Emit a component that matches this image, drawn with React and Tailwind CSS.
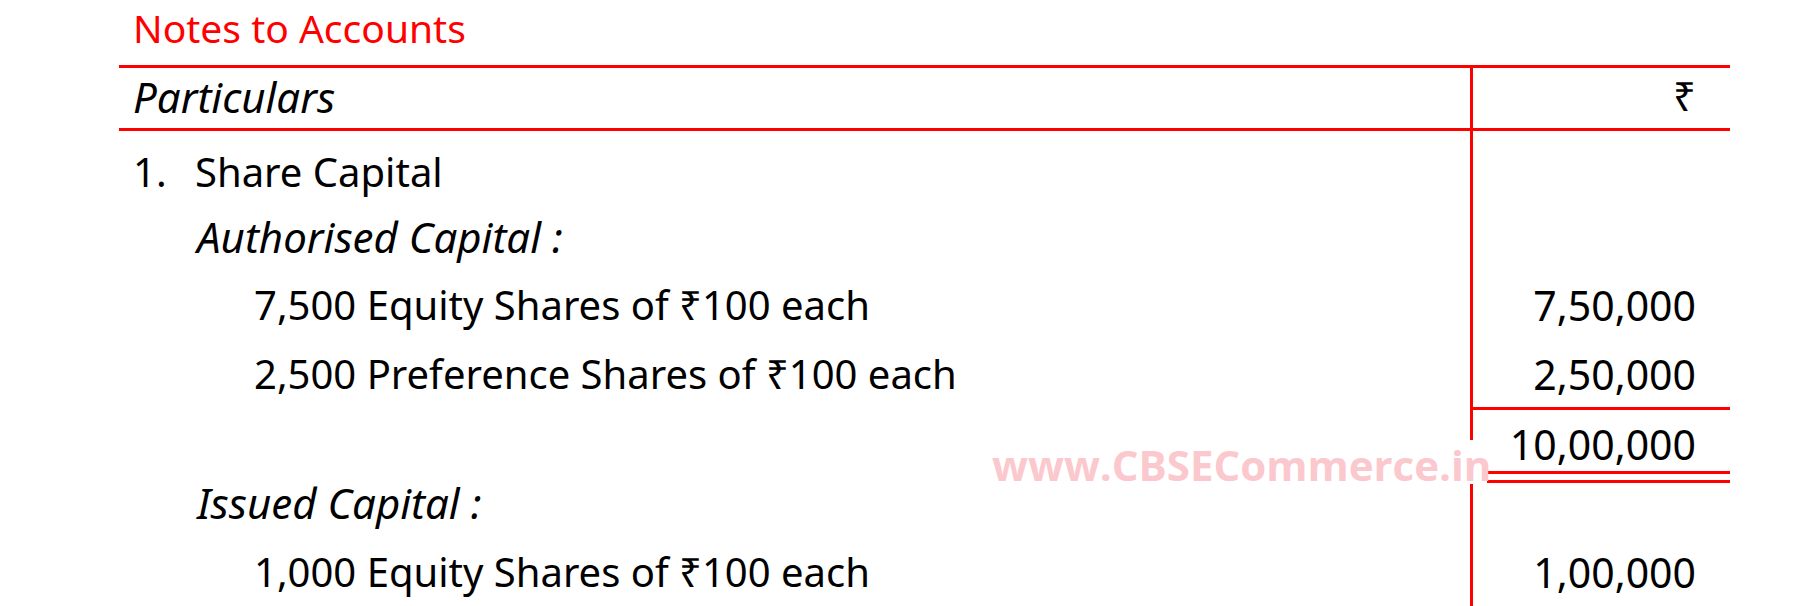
export default function App() {
  return (
    <div className="relative h-[606px] w-[1796px] overflow-hidden bg-white font-['Noto_Sans',sans-serif] text-[40px] leading-[48px] text-black">
      <div className="ml-[119px] w-[1611px]">
        <h1 className="h-[65px] pl-[14px] pt-[4px] text-[39px] font-normal leading-[48px] text-[#ff0000]">Notes to Accounts</h1>

        <div className="flex border-y-[3px] border-[#ff0000]">
          <div className="h-[60px] w-[1351px] pl-[14px] pt-[5px] text-[42px] italic">Particulars</div>
          <div className="flex-1 border-l-[3px] border-[#ff0000] pr-[34px] pt-[4px] text-right">₹</div>
        </div>

        <div className="flex">
          <div className="flex w-[1351px] flex-col">
            <div className="mt-[17px] flex h-[48px] pl-[14px]">
              <span className="w-[62px]">1.</span>
              <span>Share Capital</span>
            </div>
            <div className="mt-[17px] h-[48px] pl-[78px] text-[42px] italic">Authorised Capital :</div>
            <div className="mt-[20px] h-[48px] pl-[135px]">7,500 Equity Shares of ₹100 each</div>
            <div className="mt-[21px] h-[48px] pl-[135px]">2,500 Preference Shares of ₹100 each</div>
            <div className="mt-[81px] h-[48px] pl-[78px] text-[42px] italic">Issued Capital :</div>
            <div className="mt-[21px] h-[48px] pl-[135px]">1,000 Equity Shares of ₹100 each</div>
          </div>

          <div className="flex h-[475px] flex-1 flex-col border-l-[3px] border-[#ff0000] text-right text-[41px]">
            <div className="mt-[150px] h-[48px] pr-[34px]">7,50,000</div>
            <div className="mt-[21px] h-[60px] border-b-[3px] border-[#ff0000] pr-[34px]">2,50,000</div>
            <div className="mt-[10px] h-[48px] pr-[34px]">10,00,000</div>
            <div className="mt-[3px] h-[12px] border-y-[3px] border-[#ff0000]" />
            <div className="mt-[65px] h-[48px] pr-[34px]">1,00,000</div>
          </div>
        </div>
      </div>

      {/* watermark sits over the column rule */}
      <div className="absolute left-[988px] top-[440px] h-[44px] w-[499px] whitespace-nowrap bg-white pl-[4px] font-['Open_Sans',sans-serif] text-[42px] font-bold leading-[49px] text-[#fac8cd]">
        www.CBSECommerce.in
      </div>
    </div>
  );
}
